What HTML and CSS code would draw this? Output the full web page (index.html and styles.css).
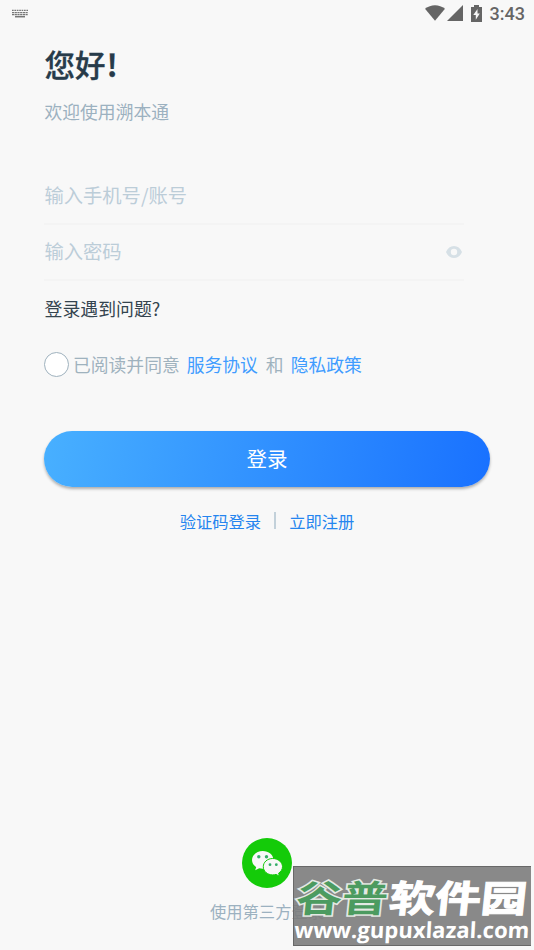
FILE: index.html
```html
<!DOCTYPE html>
<html lang="zh-CN">
<head>
<meta charset="utf-8">
<title>登录</title>
<link rel="stylesheet" href="styles.css">
</head>
<body>
<div class="screen">
  <header class="status">
    <svg class="keyboard" width="16" height="9" viewBox="0 0 16 9"><g fill="none" stroke="#777" stroke-width="1.2"><path d="M0 1.3h16" stroke-dasharray="1.7 .7"/><path d="M0 3.7h16M0 5.6h16" stroke-dasharray="2.2 .5"/><path d="M3 7.7h10" stroke-width="1.5"/></g></svg>
    <div class="status-icons">
      <svg width="20" height="16" viewBox="0 0 20 16"><path fill="#656565" d="M0 3.700Q4.500.2 10 .2t10 3.500L10 15.700z"/></svg>
      <svg class="signal" width="16" height="16" viewBox="0 0 16 16"><path fill="#656565" d="M16 0v16H0z"/></svg>
      <svg class="battery" width="11" height="17" viewBox="0 0 11 17"><path fill="#656565" d="M3 0h5v2h3v15H0V2h3z"/><path fill="#f8f8f8" d="M6.500 4 2.300 10h2.500v4.800L8.800 8.400H6.500z"/></svg>
      <span class="clock">3:43</span>
    </div>
  </header>
  <main class="content">
    <h1 class="title">您好<span class="bang">!</span></h1>
    <p class="subtitle">欢迎使用溯本通</p>
    <form class="form">
      <div class="field">输入手机号/账号</div>
      <div class="field">输入密码
        <svg class="eye" width="16" height="12" viewBox="0 0 16 12"><path fill="#d6e0e6" fill-rule="evenodd" d="M0 6C1.600 2.100 4.500 0 8 0s6.400 2.100 8 6c-1.600 3.900-4.500 6-8 6S1.600 9.900 0 6zm4.800 0a3.200 3.200 0 1 0 6.400 0 3.200 3.200 0 0 0-6.400 0z"/></svg>
      </div>
    </form>
    <div class="help">登录遇到问题?</div>
    <div class="agree"><i class="radio"></i><span>已阅读并同意</span><a class="terms">服务协议</a><span class="and">和</span><a class="privacy">隐私政策</a></div>
    <div class="login">登录</div>
    <div class="links"><a>验证码登录</a><i class="divider"></i><a>立即注册</a></div>
  </main>
  <footer class="third">
    <svg width="50" height="50" viewBox="0 0 50 50"><circle cx="25" cy="25" r="25" fill="#14cb09"/><path fill="#f8f8f8" d="M20.700 13C14.800 13 10 17 10 22c0 3 1.600 5.300 4.200 7L13.200 32.200l4-2c1.200.3 2.300.5 3.500.5 6 0 10.700-4 10.700-8.900S26.700 13 20.700 13z"/><path fill="#f8f8f8" stroke="#14cb09" stroke-width="1" d="M30.700 20.500c-5.400 0-9.400 3.700-9.400 8.200s4 8.200 9.400 8.200c1.200 0 2.300-.2 3.300-.5l3.500 1.800-.9-3c2.300-1.500 3.900-3.800 3.900-6.500 0-4.500-4.400-8.200-9.800-8.200z"/><g fill="#36ad69"><circle cx="16.800" cy="18.800" r="1.700"/><circle cx="24.500" cy="18.800" r="1.700"/><circle cx="28" cy="26.700" r="1.400"/><circle cx="34.300" cy="26.700" r="1.400"/></g></svg>
    <div class="third-text">使用第三方登录</div>
  </footer>
  <svg class="watermark" width="238" height="80" viewBox="0 0 238 80">
    <rect width="238" height="80" fill="#7c7c7c" fill-opacity=".9"/>
    <path d="M0 .5h238M.5 0v80M0 79.500h238" stroke="#686868" fill="none"/>
    <g transform="translate(2 46) skewX(-6) scale(1.240 1)">
      <text class="brand green" x="0" y="0">谷普</text>
      <text class="brand white" x="75" y="0">软件园</text>
    </g>
    <g transform="translate(1 72) skewX(-3)">
      <text class="site" x="0" y="0" textLength="235" lengthAdjust="spacingAndGlyphs">www.gupuxlazal.com</text>
    </g>
  </svg>
</div>
</body>
</html>
```
FILE: styles.css
```css
* { box-sizing: border-box; }
body { margin: 0; background: #f8f8f8; font-family: "Noto Sans CJK SC", sans-serif; }
.screen { position: relative; width: 534px; height: 950px; display: flex; flex-direction: column; overflow: hidden; }
.status { height: 28px; display: flex; justify-content: space-between; align-items: flex-start; padding: 5px 9px 0 12px; }
.keyboard { margin-top: 4px; }
.status-icons { display: flex; align-items: flex-start; }
.signal { margin-left: 2px; }
.battery { margin-left: 8px; }
.clock { margin-left: 8px; font: 500 18px/18px Roboto, sans-serif; color: #656565; }
.content { padding: 0 44px; flex: 1; }
.title { margin: 14px 0 0 .5px; font-size: 30.5px; line-height: 44px; font-weight: 500; -webkit-text-stroke: .3px #273b4a; color: #273b4a; }
.bang { margin-left: 1px; font-weight: 700; }
.subtitle { margin: 12px 0 0 .5px; font-size: 17.8px; line-height: 26px; color: #9cb1c0; }
.form { width: 420px; margin-top: 45px; }
.field { height: 56px; border-bottom: 2px solid #f4f4f4; display: flex; justify-content: space-between; align-items: center; padding: 0 2px 2px .5px; font-size: 19.3px; color: #bccdd8; }
.eye { margin-top: 2px; }
.help { margin: 14px 0 0 .5px; font-size: 17.9px; line-height: 26px; color: #34444f; }
.agree { margin-top: 30px; height: 26px; display: flex; align-items: center; font-size: 17.8px; color: #9fb2be; }
.radio { width: 25px; height: 25px; margin-right: 4px; border: 1px solid #9fb2be; border-radius: 50%; background: #fff; }
.terms, .privacy { color: #409cff; }
.terms { margin-left: 7px; }
.and { margin: 0 7px 0 8px; }
.login { height: 56px; margin: 54px 0 0; border-radius: 28px; background: linear-gradient(100deg, #48b0ff, #1971ff); box-shadow: 0 2px 3px rgba(0,0,0,.3); color: #fff; font-size: 20.5px; line-height: 55px; text-align: center; }
.links { margin-top: 22px; display: flex; justify-content: center; align-items: center; font-size: 16.3px; line-height: 24px; color: #2585ef; }
.divider { width: 2px; height: 17px; margin: -2px 13px 0; background: #c3d1da; }
.third { width: 534px; height: 112px; display: flex; flex-direction: column; align-items: center; }
.third-text { margin-top: 11px; font-size: 16.3px; line-height: 24px; color: #9cb1c0; }
.watermark { position: absolute; left: 293px; top: 866px; }
.brand { font-size: 37px; font-weight: 700; }
.green { fill: #4c9b60; stroke: #e4e9e4; stroke-width: 3px; paint-order: stroke; }
.white { fill: #fff; stroke: #fff; stroke-width: 1px; }
.site { font: 700 22px "Open Sans", sans-serif; fill: #fff; }
```
